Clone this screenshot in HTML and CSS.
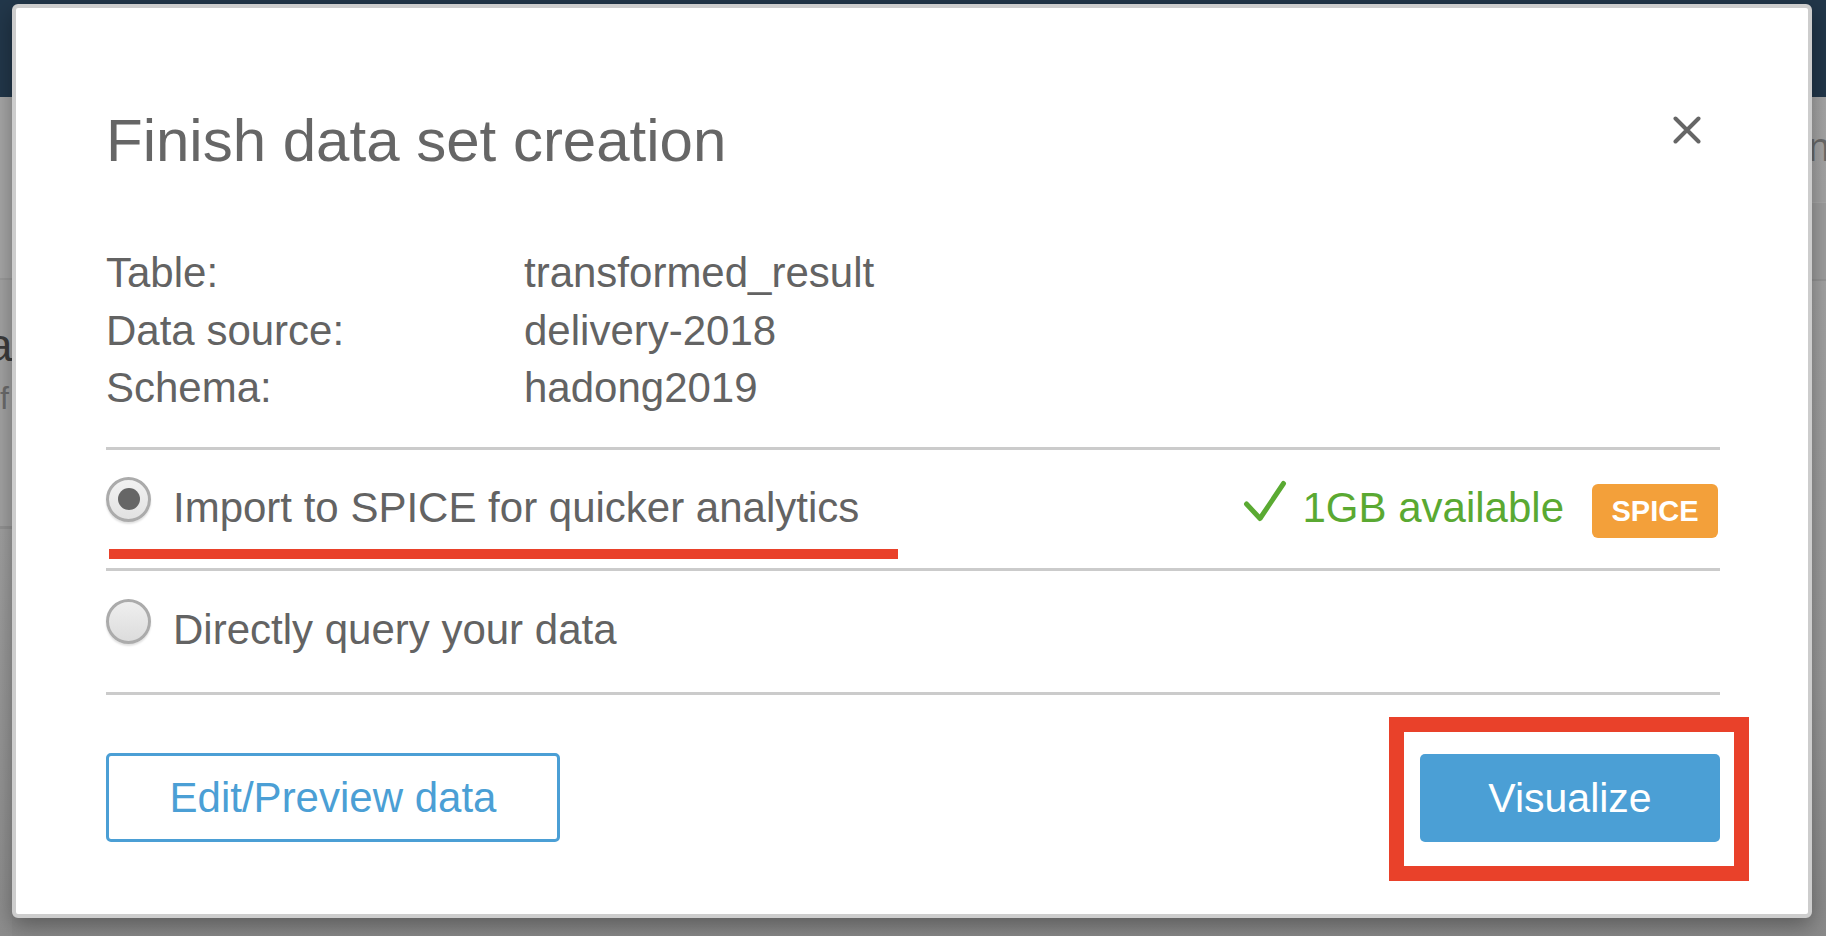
FILE: index.html
```html
<!DOCTYPE html>
<html lang="en">
<head>
<meta charset="utf-8">
<title>Finish data set creation</title>
<link rel="stylesheet" href="styles.css">
</head>
<body>
<div class="page">
  <div class="page-header"></div>
  <div class="page-body">
    <div class="bg-left">
      <div class="bg-left-top"></div>
      <div class="bg-left-mid">
        <div class="bg-heading">a</div>
        <div class="bg-sub">f</div>
      </div>
      <div class="bg-left-bottom"></div>
    </div>
    <div class="bg-right">
      <div class="bg-right-text">n</div>
      <div class="bg-right-band"></div>
    </div>
  </div>
</div>

<div class="modal" role="dialog" aria-labelledby="dlg-title">
  <div class="header">
    <h1 class="title" id="dlg-title">Finish data set creation</h1>
    <svg class="close" width="28" height="28" viewBox="0 0 28 28" aria-label="Close">
      <path d="M2.5 2.5 L25.5 25.5 M25.5 2.5 L2.5 25.5" stroke="#666" stroke-width="4" stroke-linecap="round" fill="none"/>
    </svg>
  </div>

  <div class="info">
    <div class="info-label">Table:</div><div class="info-value">transformed_result</div>
    <div class="info-label">Data source:</div><div class="info-value">delivery-2018</div>
    <div class="info-label">Schema:</div><div class="info-value">hadong2019</div>
  </div>

  <div class="options">
    <div class="option option-first">
      <div class="option-main">
        <span class="radio radio-checked"><span class="radio-dot"></span></span>
        <span class="option-label">Import to SPICE for quicker analytics</span>
        <div class="capacity">
          <svg class="check" width="44" height="44" viewBox="0 0 44 44">
            <path d="M3.5 24 L17 38.5 L40.5 3.5" stroke="#5aaa32" stroke-width="5" stroke-linecap="round" stroke-linejoin="round" fill="none"/>
          </svg>
          <span class="avail">1GB available</span>
          <span class="badge">SPICE</span>
        </div>
      </div>
      <div class="mark-underline"></div>
    </div>
    <div class="option option-second">
      <div class="option-main">
        <span class="radio"></span>
        <span class="option-label">Directly query your data</span>
      </div>
    </div>
  </div>

  <div class="footer">
    <button class="btn btn-outline">Edit/Preview data</button>
    <button class="btn btn-primary">Visualize<span class="mark-box"></span></button>
  </div>
</div>
</body>
</html>
```

FILE: styles.css
```css
html, body {
  margin: 0;
  padding: 0;
}

body {
  width: 1826px;
  height: 936px;
  overflow: hidden;
  position: relative;
  background: #8f8f8f;
  font-family: "Liberation Sans", Arial, Helvetica, sans-serif;
}

/* ---------- dimmed background page ---------- */
.page {
  display: flex;
  flex-direction: column;
  height: 936px;
}

.page-header {
  height: 97px;
  background: #22374a;
  flex: none;
}

.page-body {
  flex: 1;
  display: flex;
  justify-content: space-between;
  background: linear-gradient(#a6a6a6, #9a9a9a 70%, #8a8a8a);
}

.bg-left {
  width: 12px;
  display: flex;
  flex-direction: column;
}

.bg-left-top {
  height: 181px;
  border-bottom: 2px solid #9b9b9b;
  background: #a7a7a7;
}

.bg-left-mid {
  height: 246px;
  border-bottom: 3px solid #939393;
  background: #a3a3a3;
  overflow: visible;
}

.bg-heading {
  margin: 42px 0 0 -13px;
  font-size: 46px;
  line-height: 46px;
  color: #3c3c3c;
}

.bg-sub {
  margin: 14px 0 0 0;
  font-size: 32px;
  line-height: 32px;
  color: #6c6c6c;
}

.bg-left-bottom {
  flex: 1;
  background: linear-gradient(#a0a0a0, #8d8d8d);
}

.bg-right {
  width: 14px;
  display: flex;
  flex-direction: column;
  overflow: hidden;
}

.bg-right-text {
  height: 105px;
  font-size: 40px;
  line-height: 40px;
  padding-top: 30px;
  box-sizing: border-box;
  color: #6a6a6a;
  margin-left: -4px;
}

.bg-right-band {
  height: 76px;
  background: #9e9e9e;
  border-top: 1px solid #a9a9a9;
  border-bottom: 2px solid #959595;
}

/* ---------- modal ---------- */
.modal {
  position: absolute;
  left: 12px;
  top: 4px;
  width: 1800px;
  height: 914px;
  box-sizing: border-box;
  border: 4px solid #cdcdcd;
  border-radius: 6px;
  background: #ffffff;
  padding: 103px 88px 0 90px;
  box-shadow: 0 8px 22px rgba(0, 0, 0, 0.35);
  color: #636363;
}

.header {
  display: flex;
  justify-content: space-between;
  align-items: flex-start;
  height: 60px;
}

.title {
  margin: 0;
  font-size: 60px;
  line-height: 60px;
  font-weight: normal;
  color: #666666;
}

.close {
  margin-top: 5px;
  margin-right: 19px;
  flex: none;
}

.info {
  margin-top: 73px;
  display: grid;
  grid-template-columns: 418px 1fr;
  font-size: 42px;
  line-height: 57.5px;
  color: #636363;
}

.options {
  margin-top: 30px;
  border-top: 3px solid #cbcbcb;
}

.option {
  border-bottom: 3px solid #cbcbcb;
}

.option-first {
  padding-top: 33px;
}

.option-second {
  padding-top: 34px;
  padding-bottom: 37px;
}

.option-main {
  display: flex;
  align-items: flex-start;
  height: 50px;
}

.radio {
  flex: none;
  width: 45px;
  height: 45px;
  box-sizing: border-box;
  border: 3px solid #ababab;
  border-radius: 50%;
  background: linear-gradient(#efefef, #dcdcdc);
  box-shadow: 0 2px 2px rgba(0, 0, 0, 0.12);
  margin-top: -6px;
  display: flex;
  align-items: center;
  justify-content: center;
}

.radio-checked {
  background: linear-gradient(#f2f2f2, #e2e2e2);
}

.radio-dot {
  width: 22px;
  height: 22px;
  border-radius: 50%;
  background: #666666;
}

.option-label {
  margin-left: 22px;
  font-size: 42px;
  line-height: 50px;
  color: #636363;
  white-space: nowrap;
}

.capacity {
  margin-left: auto;
  display: flex;
  align-items: flex-start;
}

.check {
  margin-top: -3px;
  flex: none;
}

.avail {
  margin-left: 16px;
  font-size: 42px;
  line-height: 50px;
  color: #5aa932;
  white-space: nowrap;
}

.badge {
  margin-left: 28px;
  margin-right: 2px;
  margin-top: 1px;
  width: 126px;
  height: 54px;
  border-radius: 6px;
  background: #f3a03a;
  color: #ffffff;
  font-weight: bold;
  font-size: 29px;
  line-height: 54px;
  text-align: center;
}

.mark-underline {
  margin: 16.5px 0 9px 3px;
  width: 789px;
  height: 10px;
  background: #e9412a;
}

.footer {
  margin-top: 58px;
  display: flex;
  justify-content: space-between;
  align-items: flex-start;
}

.btn {
  font-family: "Liberation Sans", Arial, Helvetica, sans-serif;
  font-size: 42px;
  border-radius: 5px;
  box-sizing: border-box;
  cursor: pointer;
  padding: 0;
}

.btn-outline {
  width: 454px;
  height: 89px;
  border: 3px solid #4b9fd5;
  background: #ffffff;
  color: #4b9fd5;
}

.btn-primary {
  position: relative;
  width: 300px;
  height: 88px;
  margin-top: 1px;
  border: none;
  background: #4b9fd5;
  color: #ffffff;
  font-size: 41px;
}

.mark-box {
  position: absolute;
  left: -31px;
  right: -29px;
  top: -37px;
  bottom: -39px;
  border: 15px solid #e9412a;
  pointer-events: none;
}
```
